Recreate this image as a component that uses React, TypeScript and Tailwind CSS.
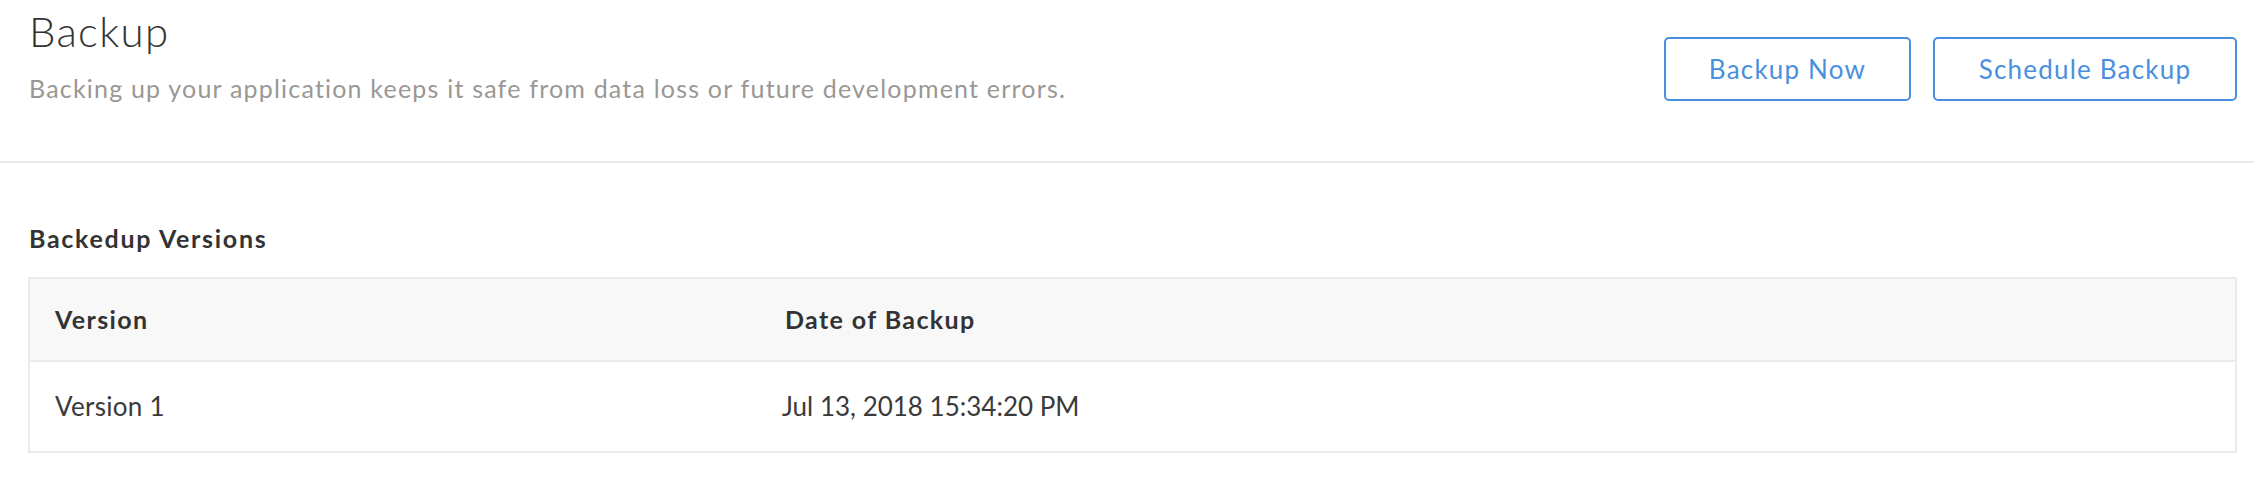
const App = () => {
  return (
    <div className="min-h-[480px] w-full bg-white font-['Lato',sans-serif] text-[#333]">
      <header className="flex items-start justify-between border-b-2 border-[#ebebeb] pr-[17px] pl-[29px] pt-[10px] h-[163px]">
        <div>
          <h1 className="text-[42px] font-light leading-[42px] tracking-[1.3px] text-[#333]">Backup</h1>
          <p className="mt-[24px] text-[25px] leading-[25px] tracking-[1.2px] text-[#9a9794]">
            Backing up your application keeps it safe from data loss or future development errors.
          </p>
        </div>
        <div className="mt-[27px] flex gap-[22px]">
          <button className="h-[64px] w-[247px] rounded-[5px] border-2 border-[#4a8fdf] text-[26px] tracking-[1.2px] text-[#4a8fdf]">
            Backup Now
          </button>
          <button className="h-[64px] w-[304px] rounded-[5px] border-2 border-[#4a8fdf] text-[26px] tracking-[1.2px] text-[#4a8fdf]">
            Schedule Backup
          </button>
        </div>
      </header>

      <section className="pr-[17px] pl-[28px]">
        <h2 className="mt-[63px] pl-[1px] text-[25px] font-bold leading-[25px] tracking-[1.7px] text-[#333]">
          Backedup Versions
        </h2>
        <div className="mt-[26px] border-2 border-[#ebebeb]">
          <div className="flex h-[83px] items-center border-b-2 border-[#ebebeb] bg-[#f8f8f8] text-[25px] font-bold tracking-[1.4px]">
            <div className="w-[730px] pl-[25px]">Version</div>
            <div className="flex-1 pl-[25px]">Date of Backup</div>
          </div>
          <div className="flex h-[89px] items-center text-[26px] text-[#3a3a3a]">
            <div className="w-[730px] pl-[25px] tracking-[0.3px]">Version 1</div>
            <div className="flex-1 pl-[22px] tracking-[0px]">Jul 13, 2018 15:34:20 PM</div>
          </div>
        </div>
      </section>
    </div>
  );
};

export default App;
